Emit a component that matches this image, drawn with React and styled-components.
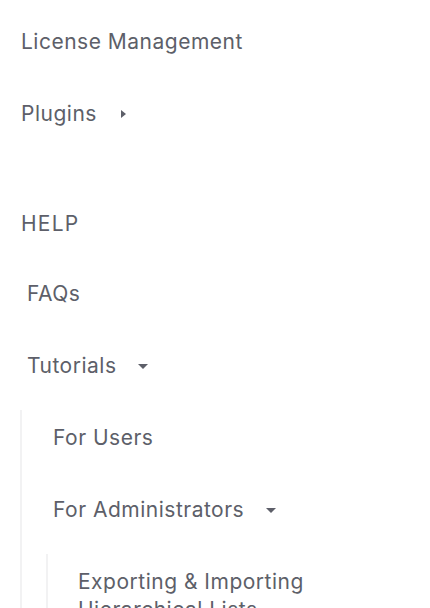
import styled, { createGlobalStyle } from 'styled-components';

const GlobalStyle = createGlobalStyle`
  body {
    margin: 0;
    background: #ffffff;
    font-family: Inter, "Noto Sans", sans-serif;
  }
`;

const Sidebar = styled.nav`
  width: 430px;
  box-sizing: border-box;
  padding: 14px 20px 0 21px;
  color: #5d5f69;
  letter-spacing: 0.5px;
`;

const List = styled.ul`
  list-style: none;
  margin: 0;
  padding: 0 0 0 ${p => p.indent || 0}px;
`;

const SubList = styled.ul`
  list-style: none;
  margin: 0 0 0 ${p => p.offset || 0}px;
  padding: 0 0 0 ${p => p.pad || 0}px;
  border-left: 2px solid #f2f2f3;
`;

const Item = styled.li`
  font-size: 21px;
  line-height: 28px;
  padding: 14px 0 30px;
`;

const Label = styled.span`
  display: inline-flex;
  align-items: center;
`;

const Heading = styled.div`
  font-size: 21px;
  line-height: 28px;
  margin-top: 38px;
  padding: 14px 0 28px;
  letter-spacing: 1.2px;
`;

const Caret = styled.span`
  display: inline-block;
  width: 0;
  height: 0;
  margin-left: ${p => (p.down ? 22 : 24)}px;
  ${p =>
    p.down
      ? `border-left: 5px solid transparent;
         border-right: 5px solid transparent;
         border-top: 5px solid #5d5f69;`
      : `border-top: 4.5px solid transparent;
         border-bottom: 4.5px solid transparent;
         border-left: 5px solid #5d5f69;`}
`;

export default function App() {
  return (
    <>
      <GlobalStyle />
      <Sidebar>
        <List>
          <Item>License Management</Item>
          <Item>
            <Label>
              Plugins <Caret />
            </Label>
          </Item>
        </List>
        <Heading>HELP</Heading>
        <List indent={6}>
          <Item>FAQs</Item>
          <Item>
            <Label>
              Tutorials <Caret down />
            </Label>
          </Item>
        </List>
        <SubList offset={-1} pad={31}>
          <Item>For Users</Item>
          <Item>
            <Label>
              For Administrators <Caret down />
            </Label>
          </Item>
          <SubList offset={-7} pad={30}>
            <Item>Exporting &amp; Importing Hierarchical Lists</Item>
          </SubList>
        </SubList>
      </Sidebar>
    </>
  );
}
